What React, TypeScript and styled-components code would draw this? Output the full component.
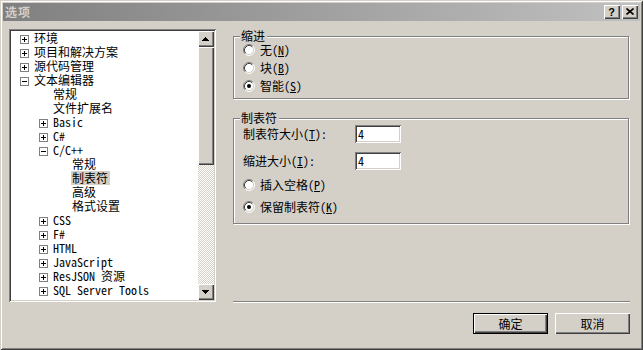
import React from 'react';
import styled, { createGlobalStyle } from 'styled-components';

const FACE = '#d4d0c8';
const UI_FONT = `"Noto Sans Mono CJK SC", "Noto Sans CJK SC", "Liberation Mono", monospace`;

const GlobalStyle = createGlobalStyle`
    html, body {
        margin: 0;
        padding: 0;
        background: ${FACE};
    }
    body {
        font-family: ${UI_FONT};
        font-size: 12px;
        color: #000;
    }
`;

const raised = `
    box-shadow: inset 1px 1px 0 #fff, inset -1px -1px 0 #404040, inset -2px -2px 0 #808080;
`;

const sunken = `
    box-shadow: inset 1px 1px 0 #808080, inset -1px -1px 0 #fff, inset 2px 2px 0 #404040, inset -2px -2px 0 ${FACE};
`;

const Window = styled.div`
    width: 643px;
    height: 350px;
    box-sizing: border-box;
    padding: 3px;
    background: ${FACE};
    box-shadow: inset 1px 1px 0 ${FACE}, inset -1px -1px 0 #404040, inset 2px 2px 0 #fff, inset -2px -2px 0 #808080;
    display: flex;
    flex-direction: column;
`;

const TitleBar = styled.div`
    height: 18px;
    display: flex;
    align-items: center;
    padding: 0 2px;
    background: linear-gradient(to right, #808080, #c0c0c0);
`;

const Title = styled.span`
    font-family: "Noto Sans CJK SC", sans-serif;
    font-weight: bold;
    font-size: 12px;
    letter-spacing: 1px;
    line-height: 18px;
    color: ${FACE};
`;

const CaptionButtons = styled.div`
    margin-left: auto;
    display: flex;
    gap: 2px;
`;

const CaptionButton = styled.div`
    width: 16px;
    height: 14px;
    box-sizing: border-box;
    background: ${FACE};
    ${raised}
    display: flex;
    align-items: center;
    justify-content: center;
    font-family: "Liberation Sans", sans-serif;
    font-weight: bold;
    font-size: 11px;
    line-height: 14px;
    padding: 0 1px 1px 0;
`;

const Body = styled.div`
    flex: 1;
    display: flex;
    flex-direction: column;
    padding: 8px 10px 0 6px;
`;

const Main = styled.div`
    display: flex;
    gap: 17px;
    height: 273px;
`;

const TreePanel = styled.div`
    width: 207px;
    box-sizing: border-box;
    padding: 2px;
    display: flex;
    background: #fff;
    ${sunken}
`;

const TreeList = styled.div`
    flex: 1;
    overflow: hidden;
`;

const TreeRow = styled.div<{ $depth: number }>`
    height: 14px;
    display: flex;
    align-items: center;
    padding-left: ${p => 9 + p.$depth * 19}px;
    white-space: nowrap;
`;

const Expander = styled.span`
    width: 13px;
    height: 14px;
    flex: none;
    display: flex;
    align-items: center;
    padding-top: 2px;
    box-sizing: border-box;
`;

const TreeLabel = styled.span<{ $selected?: boolean }>`
    line-height: 14px;
    padding: 0 2px 0 1px;
    background: ${p => (p.$selected ? FACE : 'transparent')};
`;

const ScrollBar = styled.div`
    width: 16px;
    display: flex;
    flex-direction: column;
    background: repeating-conic-gradient(#fff 0 25%, ${FACE} 0 50%) 0 0 / 2px 2px;
`;

const ScrollButton = styled.div`
    height: 16px;
    box-sizing: border-box;
    background: ${FACE};
    ${raised}
    display: flex;
    align-items: center;
    justify-content: center;
    padding: 0 1px 1px 0;
`;

const ScrollThumb = styled.div`
    height: 118px;
    background: ${FACE};
    ${raised}
`;

const ScrollTrack = styled.div`
    flex: 1;
`;

const Pane = styled.div`
    flex: 1;
    display: flex;
    flex-direction: column;
    padding-top: 7px;
`;

const GroupBox = styled.div<{ $gapTop?: number; $pad: string }>`
    position: relative;
    margin-top: ${p => p.$gapTop ?? 0}px;
    margin-right: 1px;
    border: 1px solid #808080;
    box-shadow: inset 1px 1px 0 #fff, 1px 1px 0 #fff;
    padding: ${p => p.$pad};
    display: flex;
    flex-direction: column;
`;

const Legend = styled.span`
    position: absolute;
    top: -8px;
    left: 6px;
    padding: 0 2px 0 1px;
    line-height: 14px;
    background: ${FACE};
`;

const OptionRow = styled.label<{ $gapTop?: number }>`
    height: 18px;
    margin-top: ${p => p.$gapTop ?? 0}px;
    display: flex;
    align-items: center;
    gap: 5px;
    line-height: 14px;
`;

const FieldRow = styled.div<{ $gapTop?: number }>`
    height: 18px;
    margin-top: ${p => p.$gapTop ?? 0}px;
    display: flex;
    align-items: center;
`;

const FieldLabel = styled.span`
    width: 112px;
    line-height: 14px;
`;

const TextBox = styled.div`
    width: 46px;
    height: 18px;
    box-sizing: border-box;
    padding: 2px 0 0 3px;
    line-height: 14px;
    background: #fff;
    ${sunken}
`;

const Key = styled.u`
    text-underline-offset: 1px;
`;

const Separator = styled.div`
    margin-top: auto;
    margin-bottom: -1px;
    border-top: 1px solid #808080;
    border-bottom: 1px solid #fff;
`;

const ButtonRow = styled.div`
    display: flex;
    justify-content: flex-end;
    gap: 7px;
    margin-top: 11px;
`;

const PushButton = styled.div<{ $default?: boolean }>`
    width: 75px;
    height: 21px;
    box-sizing: border-box;
    background: ${FACE};
    border: ${p => (p.$default ? '1px solid #000' : 'none')};
    ${raised}
    display: flex;
    align-items: center;
    justify-content: center;
    line-height: 14px;
`;

const PlusBox = ({ open }: { open?: boolean }) => (
    <svg width="9" height="9" viewBox="0 0 9 9">
        <rect x="0.5" y="0.5" width="8" height="8" fill="#fff" stroke="#808080" />
        <path d="M2 4.5H7" stroke="#000" />
        {!open && <path d="M4.5 2V7" stroke="#000" />}
    </svg>
);

const Arrow = ({ down }: { down?: boolean }) => (
    <svg width="7" height="4" viewBox="0 0 7 4" style={down ? { transform: 'scaleY(-1)' } : undefined}>
        <path d="M3 0h1v1h1v1h1v1h1v1H0V3h1V2h1V1h1z" fill="#000" />
    </svg>
);

const RadioMark = ({ checked }: { checked?: boolean }) => (
    <svg width="12" height="12" viewBox="0 0 12 12" style={{ flex: 'none' }}>
        <circle cx="6" cy="6" r="4.5" fill="#fff" />
        <path d="M2.11 9.89A5.5 5.5 0 0 1 9.89 2.11" fill="none" stroke="#808080" />
        <path d="M2.82 9.18A4.5 4.5 0 0 1 9.18 2.82" fill="none" stroke="#404040" />
        <path d="M9.89 2.11A5.5 5.5 0 0 1 2.11 9.89" fill="none" stroke="#fff" />
        <path d="M9.18 2.82A4.5 4.5 0 0 1 2.82 9.18" fill="none" stroke={FACE} />
        {checked && <circle cx="6" cy="6" r="2" fill="#000" />}
    </svg>
);

const CloseGlyph = () => (
    <svg width="8" height="7" viewBox="0 0 8 7">
        <path d="M0.5 0.5L7.5 6.5M7.5 0.5L0.5 6.5" stroke="#000" strokeWidth="1.6" />
    </svg>
);

interface TreeItem {
    label: string;
    depth: number;
    expander?: 'plus' | 'minus';
    selected?: boolean;
}

const treeItems: TreeItem[] = [
    { label: '环境', depth: 0, expander: 'plus' },
    { label: '项目和解决方案', depth: 0, expander: 'plus' },
    { label: '源代码管理', depth: 0, expander: 'plus' },
    { label: '文本编辑器', depth: 0, expander: 'minus' },
    { label: '常规', depth: 1 },
    { label: '文件扩展名', depth: 1 },
    { label: 'Basic', depth: 1, expander: 'plus' },
    { label: 'C#', depth: 1, expander: 'plus' },
    { label: 'C/C++', depth: 1, expander: 'minus' },
    { label: '常规', depth: 2 },
    { label: '制表符', depth: 2, selected: true },
    { label: '高级', depth: 2 },
    { label: '格式设置', depth: 2 },
    { label: 'CSS', depth: 1, expander: 'plus' },
    { label: 'F#', depth: 1, expander: 'plus' },
    { label: 'HTML', depth: 1, expander: 'plus' },
    { label: 'JavaScript', depth: 1, expander: 'plus' },
    { label: 'ResJSON 资源', depth: 1, expander: 'plus' },
    { label: 'SQL Server Tools', depth: 1, expander: 'plus' },
    { label: 'T-SQL90', depth: 1, expander: 'plus' },
];

const Radio = ({ text, accel, checked, gapTop }: { text: string; accel: string; checked?: boolean; gapTop?: number }) => (
    <OptionRow $gapTop={gapTop}>
        <RadioMark checked={checked} />
        <span>
            {text}(<Key>{accel}</Key>)
        </span>
    </OptionRow>
);

const App: React.FC = () => (
    <>
        <GlobalStyle />
        <Window>
            <TitleBar>
                <Title>选项</Title>
                <CaptionButtons>
                    <CaptionButton>?</CaptionButton>
                    <CaptionButton>
                        <CloseGlyph />
                    </CaptionButton>
                </CaptionButtons>
            </TitleBar>
            <Body>
                <Main>
                    <TreePanel>
                        <TreeList>
                            {treeItems.map((item, i) => (
                                <TreeRow key={i} $depth={item.depth}>
                                    <Expander>{item.expander && <PlusBox open={item.expander === 'minus'} />}</Expander>
                                    <TreeLabel $selected={item.selected}>{item.label}</TreeLabel>
                                </TreeRow>
                            ))}
                        </TreeList>
                        <ScrollBar>
                            <ScrollButton>
                                <Arrow />
                            </ScrollButton>
                            <ScrollThumb />
                            <ScrollTrack />
                            <ScrollButton>
                                <Arrow down />
                            </ScrollButton>
                        </ScrollBar>
                    </TreePanel>
                    <Pane>
                        <GroupBox $pad="4px 0 3px 9px">
                            <Legend>缩进</Legend>
                            <Radio text="无" accel="N" />
                            <Radio text="块" accel="B" />
                            <Radio text="智能" accel="S" checked />
                        </GroupBox>
                        <GroupBox $gapTop={19} $pad="6px 0 7px 9px">
                            <Legend>制表符</Legend>
                            <FieldRow>
                                <FieldLabel>
                                    制表符大小(<Key>T</Key>):
                                </FieldLabel>
                                <TextBox>4</TextBox>
                            </FieldRow>
                            <FieldRow $gapTop={9}>
                                <FieldLabel>
                                    缩进大小(<Key>I</Key>):
                                </FieldLabel>
                                <TextBox>4</TextBox>
                            </FieldRow>
                            <Radio text="插入空格" accel="P" gapTop={6} />
                            <Radio text="保留制表符" accel="K" checked gapTop={4} />
                        </GroupBox>
                        <Separator />
                    </Pane>
                </Main>
                <ButtonRow>
                    <PushButton $default>确定</PushButton>
                    <PushButton>取消</PushButton>
                </ButtonRow>
            </Body>
        </Window>
    </>
);

export default App;
